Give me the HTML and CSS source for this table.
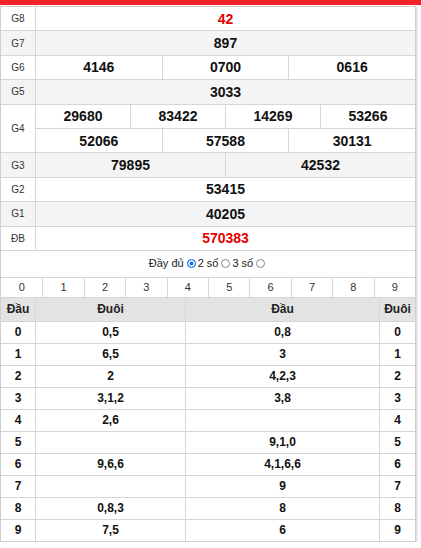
FILE: index.html
```html
<!DOCTYPE html>
<html lang="vi">
<head>
<meta charset="utf-8">
<title>KQXS</title>
<link rel="stylesheet" href="styles.css">
</head>
<body>
<div class="topbar"></div>
<div class="box">
  <div class="kq">
    <div class="lbl">G8</div><div class="v s12 red">42</div>
    <div class="lbl alt">G7</div><div class="v s12 alt">897</div>
    <div class="lbl">G6</div><div class="v s4">4146</div><div class="v s4">0700</div><div class="v s4">0616</div>
    <div class="lbl alt">G5</div><div class="v s12 alt">3033</div>
    <div class="lbl r2">G4</div><div class="v s3">29680</div><div class="v s3">83422</div><div class="v s3">14269</div><div class="v s3">53266</div>
    <div class="v s4">52066</div><div class="v s4">57588</div><div class="v s4">30131</div>
    <div class="lbl alt">G3</div><div class="v s6 alt">79895</div><div class="v s6 alt">42532</div>
    <div class="lbl">G2</div><div class="v s12">53415</div>
    <div class="lbl alt">G1</div><div class="v s12 alt">40205</div>
    <div class="lbl">ĐB</div><div class="v s12 red">570383</div>
  </div>
  <div class="opts">
    <span>Đầy đủ</span><input type="radio" name="m" checked><span>2 số</span><input type="radio" name="m"><span>3 số</span><input type="radio" name="m">
  </div>
  <div class="nums">
    <div>0</div><div>1</div><div>2</div><div>3</div><div>4</div><div>5</div><div>6</div><div>7</div><div>8</div><div>9</div>
  </div>
  <div class="loto">
    <div class="h">Đầu</div><div class="h">Đuôi</div><div class="h">Đầu</div><div class="h">Đuôi</div>
    <div>0</div><div>0,5</div><div>0,8</div><div>0</div>
    <div>1</div><div>6,5</div><div>3</div><div>1</div>
    <div>2</div><div>2</div><div>4,2,3</div><div>2</div>
    <div>3</div><div>3,1,2</div><div>3,8</div><div>3</div>
    <div>4</div><div>2,6</div><div></div><div>4</div>
    <div>5</div><div></div><div>9,1,0</div><div>5</div>
    <div>6</div><div>9,6,6</div><div>4,1,6,6</div><div>6</div>
    <div>7</div><div></div><div>9</div><div>7</div>
    <div>8</div><div>0,8,3</div><div>8</div><div>8</div>
    <div class="last">9</div><div class="last">7,5</div><div class="last">6</div><div class="last">9</div>
  </div>
</div>
</body>
</html>
```
FILE: styles.css
```css
* { box-sizing: border-box; }
body {
  margin: 0;
  font-family: "Liberation Sans", Arial, sans-serif;
  color: #111;
  background: #fff;
}
.topbar {
  height: 5px;
  background: #f1222b;
  margin-bottom: 1px;
}
.box {
  width: 416px;
  border: 1px solid #cfcfcf;
  box-shadow: 1px 1px 2px rgba(0, 0, 0, 0.18);
}
.kq {
  display: grid;
  grid-template-columns: 34px repeat(12, 1fr);
  grid-auto-rows: 24.4px;
}
.kq > div {
  display: flex;
  align-items: center;
  justify-content: center;
  border-bottom: 1px solid #d6d6d6;
}
.lbl {
  font-size: 10px;
  color: #333;
}
.v {
  border-left: 1px solid #d6d6d6;
  font-size: 14px;
  font-weight: bold;
  color: #111;
}
.alt { background: #f4f4f4; }
.red { color: #e50000; }
.r2 { grid-row: span 2; }
.s12 { grid-column: span 12; }
.s6 { grid-column: span 6; }
.s4 { grid-column: span 4; }
.s3 { grid-column: span 3; }
.opts {
  height: 27px;
  border-bottom: 1px solid #d6d6d6;
  display: flex;
  align-items: center;
  justify-content: center;
  font-size: 11px;
  color: #222;
  padding-bottom: 1px;
}
.opts input {
  -webkit-appearance: none;
  appearance: none;
  width: 9px;
  height: 9px;
  margin: 0 2px 0 3px;
  border: 1px solid #8a8a8a;
  border-radius: 50%;
  background: #fff;
}
.opts input:checked {
  border-color: #1a73e8;
  background: #1a73e8;
  box-shadow: inset 0 0 0 1.5px #fff;
}
.nums {
  display: grid;
  grid-template-columns: repeat(10, 1fr);
  height: 20px;
  border-bottom: 1px solid #d6d6d6;
}
.nums > div {
  display: flex;
  align-items: center;
  justify-content: center;
  font-size: 11px;
  color: #333;
  border-left: 1px solid #d6d6d6;
}
.nums > div:first-child { border-left: none; }
.loto {
  display: grid;
  grid-template-columns: 34px 150px 194px 36px;
  grid-template-rows: 24px repeat(9, 22px) 21px;
}
.loto > div {
  display: flex;
  align-items: center;
  justify-content: center;
  font-size: 12px;
  font-weight: bold;
  color: #111;
  border-bottom: 1px solid #d6d6d6;
  border-left: 1px solid #d6d6d6;
}
.loto > div:nth-child(4n+1) { border-left: none; }
.loto > div.last { border-bottom: none; }
.loto > .h {
  background: #e3e3e3;
  color: #222;
}
```
